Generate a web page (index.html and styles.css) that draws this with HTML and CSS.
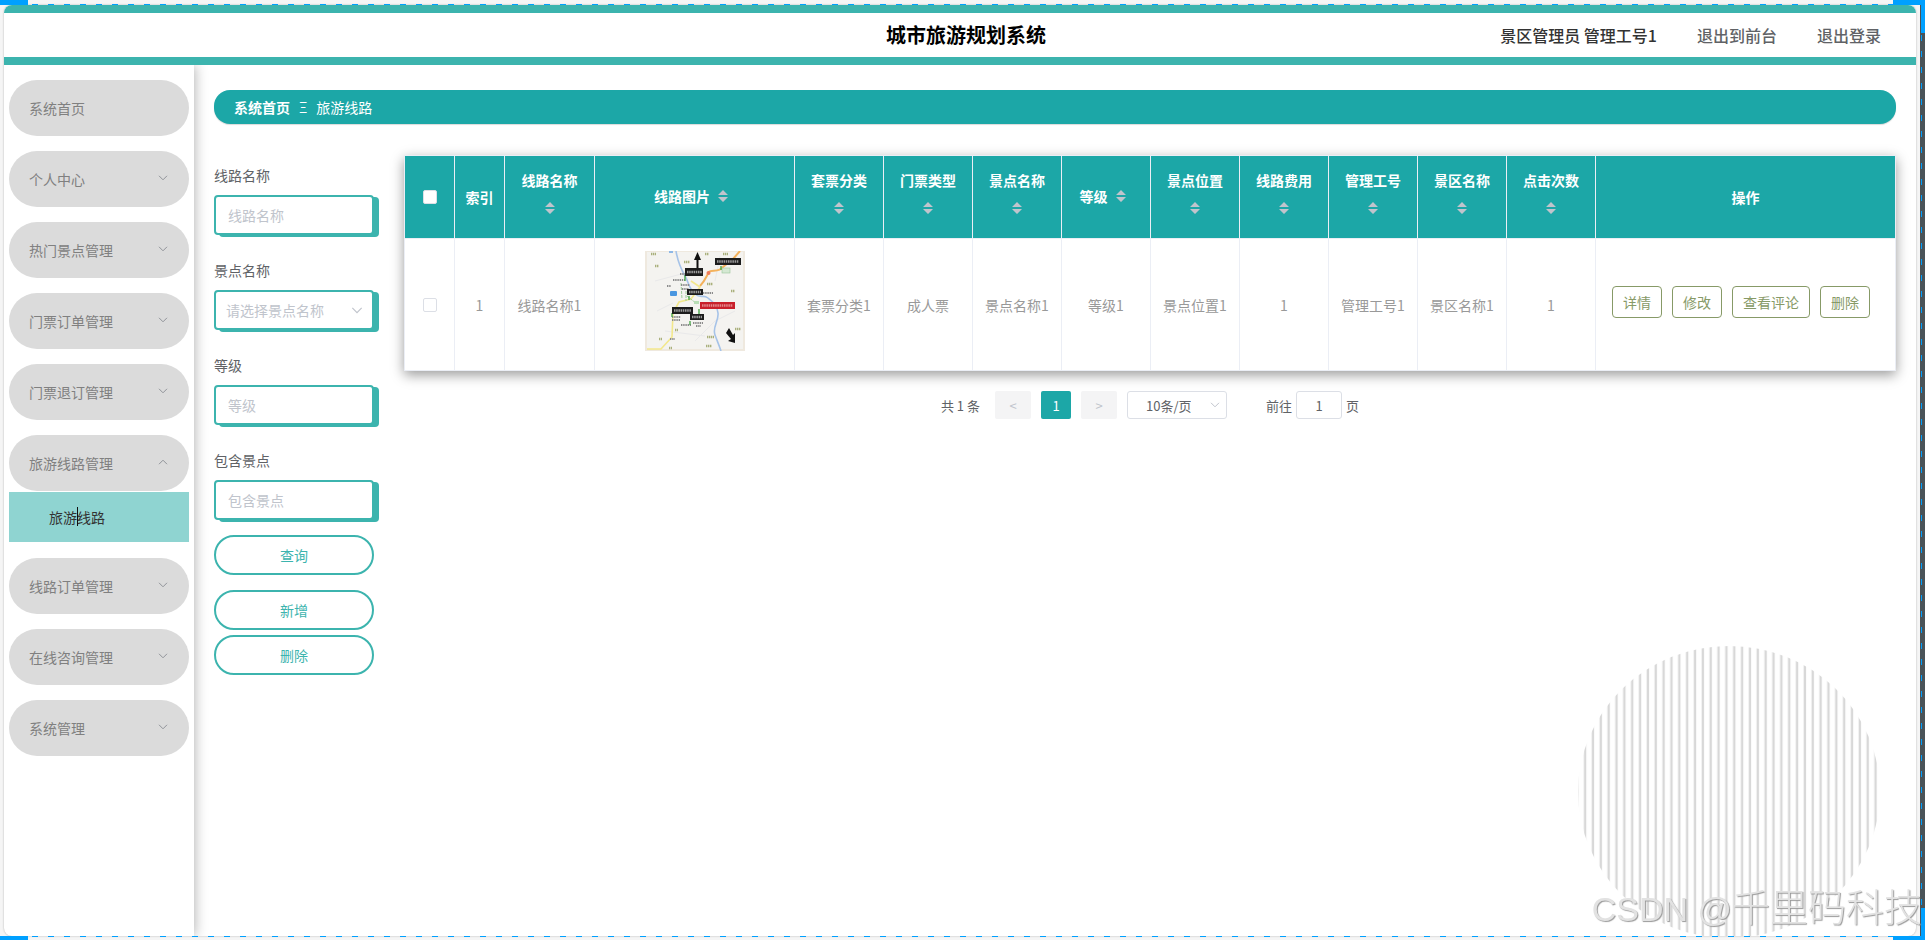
FILE: index.html
```html
<!DOCTYPE html>
<html lang="zh-CN">
<head>
    <meta charset="UTF-8">
    <meta name="viewport" content="width=device-width, initial-scale=1.0">
    <title>城市旅游规划系统</title>
    <link rel="stylesheet" href="styles.css">
</head>
<body>
    <svg class="defs" width="0" height="0">
        <symbol id="down" viewBox="0 0 10 6"><path d="M1 0.8 5 4.8 9 0.8" fill="none" stroke="currentColor"/></symbol>
        <symbol id="up" viewBox="0 0 10 6"><path d="M1 5.2 5 1.2 9 5.2" fill="none" stroke="currentColor"/></symbol>
        <symbol id="sort" viewBox="0 0 10 12"><path d="M0 5 5 0 10 5zM0 7 5 12 10 7z" fill="#c0c4cc"/></symbol>
    </svg>

    <div class="app">
        <header class="header">
            <h1>城市旅游规划系统</h1>
            <div class="user">
                <span class="user-name">景区管理员 管理工号1</span>
                <a href="#">退出到前台</a>
                <a href="#">退出登录</a>
            </div>
        </header>

        <div class="body">
            <nav class="sidebar">
                <a class="menu-item" href="#">系统首页</a>
                <button class="menu-item">个人中心<svg class="arrow"><use href="#down"/></svg></button>
                <button class="menu-item">热门景点管理<svg class="arrow"><use href="#down"/></svg></button>
                <button class="menu-item">门票订单管理<svg class="arrow"><use href="#down"/></svg></button>
                <button class="menu-item">门票退订管理<svg class="arrow"><use href="#down"/></svg></button>
                <div class="menu-group">
                    <button class="menu-item">旅游线路管理<svg class="arrow"><use href="#up"/></svg></button>
                    <a class="sub-item" href="#">旅游线路<i class="caret"></i></a>
                </div>
                <button class="menu-item">线路订单管理<svg class="arrow"><use href="#down"/></svg></button>
                <button class="menu-item">在线咨询管理<svg class="arrow"><use href="#down"/></svg></button>
                <button class="menu-item">系统管理<svg class="arrow"><use href="#down"/></svg></button>
            </nav>

            <main class="main">
                <div class="breadcrumb"><a href="#">系统首页</a><span>Ξ</span><span>旅游线路</span></div>

                <div class="content">
                    <form class="search">
                        <div class="field">
                            <label for="name">线路名称</label>
                            <input id="name" type="text" placeholder="线路名称">
                        </div>
                        <div class="field">
                            <label for="spot">景点名称</label>
                            <div class="select-box">
                                <select id="spot"><option>请选择景点名称</option></select>
                                <svg class="select-arrow"><use href="#down"/></svg>
                            </div>
                        </div>
                        <div class="field">
                            <label for="level">等级</label>
                            <input id="level" type="text" placeholder="等级">
                        </div>
                        <div class="field">
                            <label for="include">包含景点</label>
                            <input id="include" type="text" placeholder="包含景点">
                        </div>
                        <button class="btn btn-query" type="button">查询</button>
                        <button class="btn" type="button">新增</button>
                        <button class="btn" type="button">删除</button>
                    </form>

                    <div class="list">
                        <table class="table">
                            <colgroup>
                                <col class="col-small"><col class="col-small"><col class="col-name"><col class="col-pic">
                                <col><col><col><col><col><col><col><col><col>
                                <col class="col-ops">
                            </colgroup>
                            <thead>
                                <tr>
                                    <th><input type="checkbox" aria-label="全选"></th>
                                    <th>索引</th>
                                    <th><span class="sortable">线路名称<svg><use href="#sort"/></svg></span></th>
                                    <th><span class="sortable inline">线路图片<svg><use href="#sort"/></svg></span></th>
                                    <th><span class="sortable">套票分类<svg><use href="#sort"/></svg></span></th>
                                    <th><span class="sortable">门票类型<svg><use href="#sort"/></svg></span></th>
                                    <th><span class="sortable">景点名称<svg><use href="#sort"/></svg></span></th>
                                    <th><span class="sortable inline">等级<svg><use href="#sort"/></svg></span></th>
                                    <th><span class="sortable">景点位置<svg><use href="#sort"/></svg></span></th>
                                    <th><span class="sortable">线路费用<svg><use href="#sort"/></svg></span></th>
                                    <th><span class="sortable">管理工号<svg><use href="#sort"/></svg></span></th>
                                    <th><span class="sortable">景区名称<svg><use href="#sort"/></svg></span></th>
                                    <th><span class="sortable">点击次数<svg><use href="#sort"/></svg></span></th>
                                    <th>操作</th>
                                </tr>
                            </thead>
                            <tbody>
                                <tr>
                                    <td><input type="checkbox" aria-label="选择"></td>
                                    <td>1</td>
                                    <td>线路名称1</td>
                                    <td>
                                        <svg class="map" viewBox="0 0 100 100">
                                            <rect width="100" height="100" fill="#efe9df"/>
                                            <rect x="2" y="1" width="96" height="97" fill="#f4f3f0"/>
                                            <path d="M10 30 40 22M12 60 28 52M50 90 70 70 90 60M20 80 60 85M75 5 70 30" fill="none" stroke="#e9e9ea"/>
                                            <path d="M31 0C33 12 36 18 40 25S44 38 50 43 58 43 63 47 72 54 73 62 67 76 70 84 74 94 76 100" fill="none" stroke="#a6c3e8" stroke-width="1.6"/>
                                            <path d="M95 0 88 8 78 16C74 22 66 18 64 21S60 30 55 35" fill="none" stroke="#f4b25c" stroke-width="2"/>
                                            <path d="M2 98H16L27 86 28 62 34 51 46 48 55 36 46 30" fill="none" stroke="#f3e88c" stroke-width="1.6"/>
                                            <path d="M36 32 37 48M42 45 52 53M41 40V50" stroke="#9ccb98" stroke-dasharray="3 1"/>
                                            <path d="M6 3H11M60 3H64M78 3H83M10 15H14M39 11H45M62 33H68M86 40H90M90 78H96M62 86H69M61 95H67M30 79H33M14 88H17M24 97H27" stroke="#aab07c" stroke-width="2.4" stroke-dasharray="1.4 .6"/>
                                            <path d="M28 29H40M22 35H26M35 23H40M58 42H68M27 66H36M27 69H35M36 74H46M48 72H58M51 75H56M25 88H30M36 34H45M37 38H44" stroke="#8c8c8c" stroke-width="2.2" stroke-dasharray="1.4 .8"/>
                                            <rect x="77" y="17" width="8" height="5" fill="#d5e8d3" stroke="#9ac59a" stroke-width=".6"/>
                                            <rect x="49" y="50" width="5" height="3" fill="#b7ddb5"/>
                                            <rect x="25" y="40" width="7" height="5" rx="1" fill="#4a96e0"/>
                                            <rect x="24" y="0" width="4" height="2" fill="#8fb8e6"/>
                                            <circle cx="63.500" cy="22" r="2" fill="#ef7d5b"/>
                                            <path d="M40 24V30M76 15V19M44 45V49M27 62V66M45 70V74M54 58V63" stroke="#4da94d" stroke-width="1.4"/>
                                            <path d="M52.500 1 49 9H51.500V17H53.500V9H56z" fill="#111"/>
                                            <path d="M84 77 81 82 86 88 83 90 90 92V82L88 84z" fill="#111"/>
                                            <path d="M40 17H58V25H40zM70 7H96V14H70zM42 38H58V44H42zM27 56H48V63H27zM45 63H59V69H45z" fill="#1c1c1c"/>
                                            <path d="M42 21H57M72 10.500H94M44 41H56M29 59.500H46M47 66H57" stroke="#9c9c9c" stroke-width="2.6" stroke-dasharray="1.5 .7"/>
                                            <rect x="55" y="51" width="35" height="7" fill="#c9202b"/>
                                            <path d="M57 54.500H88" stroke="#e2888c" stroke-width="2.4" stroke-dasharray="1.5 .7"/>
                                        </svg>
                                    </td>
                                    <td>套票分类1</td>
                                    <td>成人票</td>
                                    <td>景点名称1</td>
                                    <td>等级1</td>
                                    <td>景点位置1</td>
                                    <td>1</td>
                                    <td>管理工号1</td>
                                    <td>景区名称1</td>
                                    <td>1</td>
                                    <td>
                                        <div class="ops">
                                            <button>详情</button>
                                            <button>修改</button>
                                            <button>查看评论</button>
                                            <button>删除</button>
                                        </div>
                                    </td>
                                </tr>
                            </tbody>
                        </table>

                        <div class="pagination">
                            <span class="total">共 1 条</span>
                            <button class="page-btn" disabled>&lt;</button>
                            <button class="page-btn current">1</button>
                            <button class="page-btn" disabled>&gt;</button>
                            <div class="select-box size">
                                <select aria-label="每页条数"><option>10条/页</option></select>
                                <svg class="select-arrow"><use href="#down"/></svg>
                            </div>
                            <label class="jump">前往<input type="text" value="1">页</label>
                        </div>
                    </div>
                </div>
            </main>
        </div>

        <svg class="circle" viewBox="0 0 302 292">
            <defs>
                <pattern id="stripes" x="2.300" width="7.850" height="10" patternUnits="userSpaceOnUse">
                    <rect x="3.600" width="2.400" height="10" fill="#d8d8d8"/>
                </pattern>
            </defs>
            <ellipse cx="151" cy="146" rx="151" ry="146" fill="url(#stripes)"/>
        </svg>
    </div>

    <!-- capture frame -->
    <div class="frame">
        <i class="scroll"></i>
        <i class="dash top"></i>
        <i class="dash bottom"></i>
        <i class="dash right"></i>
        <i class="corner tl"></i>
        <i class="corner tr"></i>
        <i class="corner bl"></i>
        <i class="corner br"></i>
    </div>
    <div class="watermark"><span>CSDN @</span>千里码科技</div>
</body>
</html>
```

FILE: styles.css
```css
* {
    box-sizing: border-box;
}
body {
    margin: 0;
    height: 100vh;
    padding: 5px 9px 4px 4px;
    overflow: hidden;
    background: #f5f5f5;
    color: #606266;
    font-family: "Noto Sans CJK SC", sans-serif;
    font-size: 14px;
}
a {
    color: inherit;
    text-decoration: none;
}
button, input, select {
    font: inherit;
    color: inherit;
    margin: 0;
}
button {
    cursor: pointer;
}
.defs {
    position: absolute;
}
.app {
    display: flex;
    flex-direction: column;
    position: relative;
    height: 100%;
    background: #fff;
    border-radius: 8px;
    overflow: hidden;
    box-shadow: 0 0 2px rgba(0,0,0,0.3);
}

/* header */
.header {
    position: relative;
    z-index: 1;
    display: grid;
    grid-template-columns: 1fr auto 1fr;
    align-items: center;
    height: 60px;
    padding: 0 35px 0 47px;
    border-top: 8px solid #3cb4ae;
    border-bottom: 8px solid #3cb4ae;
    background: #fff;
}
.header h1 {
    grid-column: 2;
    margin: 0;
    color: #000;
    font-size: 20px;
    line-height: 44px;
}
.user {
    display: flex;
    justify-content: flex-end;
    gap: 40px;
    font-size: 16px;
    font-weight: 500;
}
.user-name {
    color: #333;
}
.body {
    display: flex;
    flex: 1;
}

/* sidebar */
.sidebar {
    display: flex;
    flex-direction: column;
    gap: 15px;
    width: 190px;
    padding: 15px 5px;
    box-shadow: 1px 0 12px rgba(0,0,0,0.3);
}
.menu-item {
    display: flex;
    align-items: center;
    justify-content: space-between;
    width: 100%;
    height: 56px;
    padding: 0 21px 0 20px;
    border: none;
    border-radius: 30px;
    background: #dbdbdb;
    color: #808080;
}
.arrow {
    width: 10px;
    height: 6px;
    margin-bottom: 2px;
    color: #909399;
}
.menu-group {
    display: flex;
    flex-direction: column;
    gap: 1px;
    padding-bottom: 1px;
}
.sub-item {
    position: relative;
    height: 50px;
    padding-left: 40px;
    background: #8fd4d1;
    color: #333;
    line-height: 50px;
}
.caret {
    position: absolute;
    left: 68px;
    top: 15px;
    width: 1px;
    height: 19px;
    background: #111;
}

/* main */
.main {
    flex: 1;
    min-width: 0;
    padding: 25px 20px;
}
.breadcrumb {
    display: flex;
    gap: 9px;
    padding: 0 20px;
    border-radius: 16px;
    background: #1ca7a7;
    color: #fff;
    line-height: 34px;
    box-shadow: 0 1px 1px rgba(0,0,0,0.15);
}
.breadcrumb a {
    font-weight: bold;
}
.content {
    display: flex;
    gap: 30px;
    padding-top: 31px;
}
.search {
    display: flex;
    flex-direction: column;
    width: 160px;
}
.field {
    display: flex;
    flex-direction: column;
    margin-bottom: 15px;
}
.field label {
    line-height: 40px;
}
.field input, .field select {
    width: 100%;
    height: 40px;
    padding: 0 12px;
    border: 2px solid #3cb4ae;
    border-radius: 4px;
    background: #fff;
    box-shadow: 5px 2px 0 #3cb4ae;
    outline: none;
}
.field select {
    padding: 0 10px;
    color: #c0c4cc;
}
.field input::placeholder {
    color: #c0c4cc;
}
select {
    appearance: none;
}
.select-box {
    position: relative;
}
.select-arrow {
    position: absolute;
    right: 11px;
    top: 17px;
    width: 12px;
    height: 7px;
    color: #c0c4cc;
    pointer-events: none;
}
.btn {
    height: 40px;
    margin-bottom: 5px;
    border: 2px solid #3cb4ae;
    border-radius: 20px;
    background: #fff;
    color: #3cb4ae;
}
.btn-query {
    margin-bottom: 15px;
}

/* table */
.list {
    flex: 1;
    min-width: 0;
}
.table {
    width: 100%;
    table-layout: fixed;
    border-collapse: separate;
    border-spacing: 0;
    border: 1px solid #ebeef5;
    border-width: 1px 0 0 1px;
    background: #fff;
    box-shadow: 0 4px 12px rgba(0,0,0,0.4);
}
.col-small {
    width: 50px;
}
.col-name {
    width: 90px;
}
.col-pic {
    width: 200px;
}
.col-ops {
    width: 300px;
}
.table th, .table td {
    padding: 0;
    border-right: 1px solid #ebeef5;
    border-bottom: 1px solid #ebeef5;
    text-align: center;
}
.table th {
    height: 83px;
    background: #1ca7a7;
    color: #fff;
}
.table td {
    height: 132px;
    color: #999;
}
.table input {
    appearance: none;
    display: block;
    width: 14px;
    height: 14px;
    margin: 0 auto;
    border: 1px solid #dcdfe6;
    border-radius: 2px;
    background: #fff;
}
.sortable {
    display: flex;
    flex-direction: column;
    align-items: center;
    gap: 12px;
    padding-bottom: 11px;
    line-height: 20px;
}
.sortable.inline {
    flex-direction: row;
    justify-content: center;
    gap: 8px;
    padding: 0 7px 2px 0;
}
.sortable svg {
    width: 10px;
    height: 12px;
}
.map {
    display: block;
    width: 100px;
    height: 100px;
    margin: 0 auto 7px;
}
.ops {
    display: flex;
    gap: 10px;
    padding: 0 0 6px 16px;
}
.ops button {
    height: 32px;
    padding: 0 10px;
    border: 1px solid #879a67;
    border-radius: 4px;
    background: #fff;
    color: #879a67;
}

/* pagination */
.pagination {
    display: flex;
    justify-content: center;
    align-items: center;
    gap: 10px;
    padding-top: 20px;
    font-size: 13px;
}
.total {
    margin-right: 5px;
}
.page-btn {
    width: 36px;
    height: 28px;
    padding: 0;
    border: none;
    border-radius: 2px;
    background: #f4f4f5;
    color: #c0c4cc;
}
.page-btn.current {
    width: 30px;
    background: #1ca7a7;
    color: #fff;
}
.size select {
    width: 100px;
    height: 28px;
    padding: 0 35px 0 18px;
    border: 1px solid #dcdfe6;
    border-radius: 3px;
    background: #fff;
}
.size .select-arrow {
    right: 7px;
    top: 11px;
    width: 10px;
    height: 6px;
}
.jump {
    display: flex;
    align-items: center;
    gap: 4px;
    margin-left: 29px;
}
.jump input {
    width: 46px;
    height: 28px;
    border: 1px solid #dcdfe6;
    border-radius: 3px;
    text-align: center;
}

.circle {
    position: absolute;
    right: 36px;
    bottom: -2px;
    width: 302px;
    height: 292px;
    pointer-events: none;
}

/* capture frame */
.frame {
    position: fixed;
    z-index: 2;
    inset: 0;
    pointer-events: none;
}
.frame i {
    position: absolute;
}
.scroll {
    top: 5px;
    right: 0;
    bottom: 3px;
    width: 5px;
    background: #4a5358;
}
.dash.top, .dash.bottom {
    left: 32px;
    right: 32px;
    height: 1px;
    background: repeating-linear-gradient(90deg, #00a0ff 0 6px, transparent 6px 16px);
}
.dash.top {
    top: 4px;
}
.dash.bottom {
    bottom: 3px;
}
.dash.right {
    top: 35px;
    right: 3px;
    bottom: 32px;
    width: 1px;
    background: repeating-linear-gradient(#00a0ff 0 6px, transparent 6px 16px);
}
.corner {
    width: 28px;
    height: 5px;
    background: #00a0ff;
}
.corner.tl {
    top: 0;
    left: 0;
}
.corner.tr {
    top: 0;
    right: 0;
    width: 32px;
    height: 33px;
    background: linear-gradient(#00a0ff, #00a0ff) right / 4px 100% no-repeat, linear-gradient(#00a0ff, #00a0ff) top / 100% 5px no-repeat;
}
.corner.bl {
    bottom: 0;
    left: 0;
    height: 4px;
}
.corner.br {
    bottom: 0;
    right: 0;
    width: 32px;
    height: 32px;
    background: linear-gradient(#00a0ff, #00a0ff) right / 4px 100% no-repeat, linear-gradient(#00a0ff, #00a0ff) bottom / 100% 4px no-repeat;
}
.watermark {
    position: fixed;
    z-index: 3;
    right: 3px;
    bottom: 3px;
    color: #e2e2e2;
    font-size: 38px;
    font-weight: 300;
    line-height: 56px;
    text-shadow: 1px 1px 1px #999;
    white-space: nowrap;
    pointer-events: none;
}
.watermark span {
    font-family: "Liberation Sans", sans-serif;
    font-size: 34px;
}
```
